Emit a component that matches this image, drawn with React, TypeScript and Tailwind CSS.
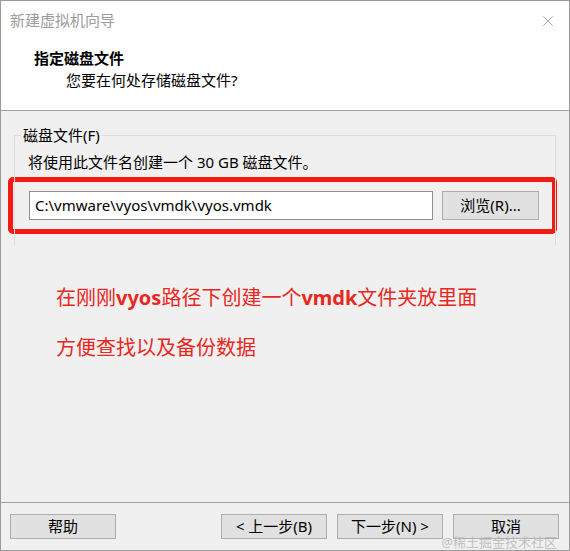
import { X } from "lucide-react";

const font = { fontFamily: '"Noto Sans", "Noto Sans CJK SC", sans-serif' };

function WinButton({ label, className = "" }: { label: string; className?: string }) {
  return (
    <button
      className={`h-[25px] w-[106px] border border-[#adadad] bg-[#e1e1e1] text-[15px] leading-none text-black ${className}`}
    >
      {label}
    </button>
  );
}

export default function App() {
  return (
    <div
      className="flex h-[551px] w-[570px] flex-col border border-[#9a9a9a] bg-[#f0f0f0] text-black"
      style={font}
    >
      <div className="flex h-[39px] shrink-0 items-center justify-between bg-white pl-[9px] pr-[12px]">
        <span className="text-[15px] text-[#9b9b9b]">新建虚拟机向导</span>
        <X size={18} strokeWidth={1} className="text-[#8a8a8a]" />
      </div>
      <div className="flex h-[71px] shrink-0 flex-col border-b border-[#a0a0a0] bg-white pl-[33px] pt-[7px]">
        <span className="text-[15px] font-bold leading-[22px]">指定磁盘文件</span>
        <span className="pl-[32px] text-[15px] leading-[22px]">您要在何处存储磁盘文件?</span>
      </div>

      <div className="flex-1 pt-[14px]">
        <div className="relative mx-[13px] mt-[10px] h-[110px] border border-b-0 border-[#dcdcdc]">
          <span className="absolute -top-[12px] left-[6px] bg-[#f0f0f0] px-[2px] text-[15px] leading-[22px]">
            磁盘文件(F)
          </span>
          <div className="pl-[13px] pt-[15px] text-[15px] leading-[22px]">
            将使用此文件名创建一个 30 GB 磁盘文件。
          </div>
        </div>
        <div className="-mt-[68px] ml-[7px] mr-[12px] flex h-[57px] items-center gap-[9px] rounded-[5px] border-[5px] border-[#f21a12] bg-[#f0f0f0] pl-[16px]">
          <div className="flex h-[29px] w-[404px] items-center border border-[#8f8f8f] bg-white pl-[5px] text-[15px]">
            C:\vmware\vyos\vmdk\vyos.vmdk
          </div>
          <button className="h-[29px] w-[97px] border border-[#adadad] bg-[#e1e1e1] text-[15px]">
            浏览(R)...
          </button>
        </div>

        <div className="mt-[51px] pl-[55px] text-[20px] leading-[26px] text-[#e8281e]">
          在刚刚<span className="font-bold">vyos</span>路径下创建一个<span className="font-bold">vmdk</span>文件夹放里面
        </div>
        <div className="mt-[24px] pl-[55px] text-[20px] leading-[26px] text-[#e8281e]">
          方便查找以及备份数据
        </div>
      </div>

      <div className="relative flex h-[48px] shrink-0 items-center border-t border-[#a0a0a0] pl-[9px] pr-[10px]">
        <WinButton label="帮助" />
        <div className="ml-auto flex gap-[10px]">
          <WinButton label="< 上一步(B)" />
          <WinButton label="下一步(N) >" />
          <WinButton label="取消" />
        </div>
        <span className="absolute bottom-[1px] right-[12px] text-[13px] leading-none text-[#b4b4b4]/80">
          @稀土掘金技术社区
        </span>
      </div>
    </div>
  );
}
